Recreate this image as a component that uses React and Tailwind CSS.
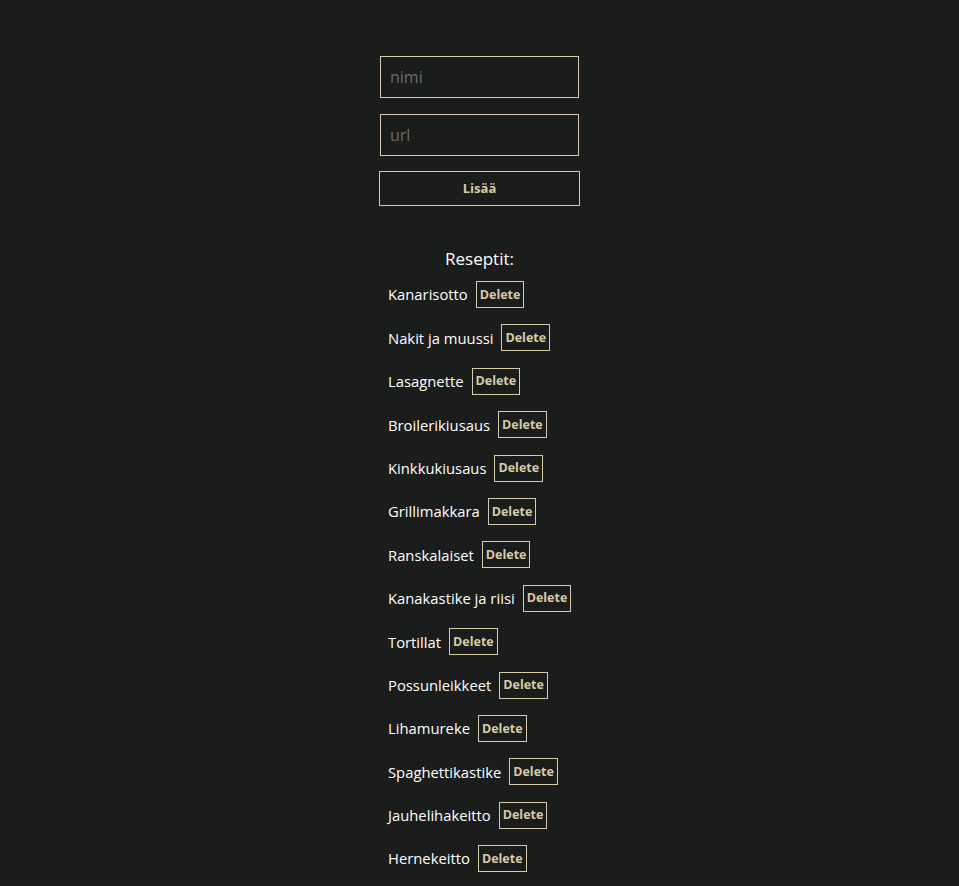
import React from "react";

const recipes = [
  "Kanarisotto",
  "Nakit ja muussi",
  "Lasagnette",
  "Broilerikiusaus",
  "Kinkkukiusaus",
  "Grillimakkara",
  "Ranskalaiset",
  "Kanakastike ja riisi",
  "Tortillat",
  "Possunleikkeet",
  "Lihamureke",
  "Spaghettikastike",
  "Jauhelihakeitto",
  "Hernekeitto",
];

export default function App() {
  return (
    <div
      className="min-h-[886px] w-full bg-[#1b1c1c] text-white"
      style={{ fontFamily: '"Open Sans", "Noto Sans", sans-serif' }}
    >
      <div className="mx-auto flex w-[201px] flex-col items-center pt-[56px]">
        <input
          placeholder="nimi"
          className="h-[42px] w-[199px] border border-[#d6cba9] bg-transparent px-[9px] text-[16px] text-white outline-none placeholder:text-[#6b6b6b]"
        />
        <input
          placeholder="url"
          className="mt-[16px] h-[42px] w-[199px] border border-[#d6cba9] bg-transparent px-[9px] text-[16px] text-white outline-none placeholder:text-[#6b6b6b]"
        />
        <button className="mt-[15px] h-[35px] w-[201px] border border-[#d6cba9] bg-transparent text-[13px] font-bold text-[#d6cba9]">
          Lisää
        </button>
        <div className="mt-[40px] text-[17px] leading-[26px] text-white">Reseptit:</div>
      </div>
      <ul className="mx-auto w-[201px] pl-[9px]">
        {recipes.map((r, i) => (
          <li
            key={r}
            className={`flex h-[27px] items-center gap-[8px] ${i === 0 ? "mt-[9px]" : "mt-[16.4px]"}`}
          >
            <span className="text-[14.8px] text-white">{r}</span>
            <button className="flex h-[27px] items-center border border-[#d6cba9] px-[3px] pt-[1px] text-[12.5px] font-bold text-[#d6cba9]">
              Delete
            </button>
          </li>
        ))}
      </ul>
    </div>
  );
}
